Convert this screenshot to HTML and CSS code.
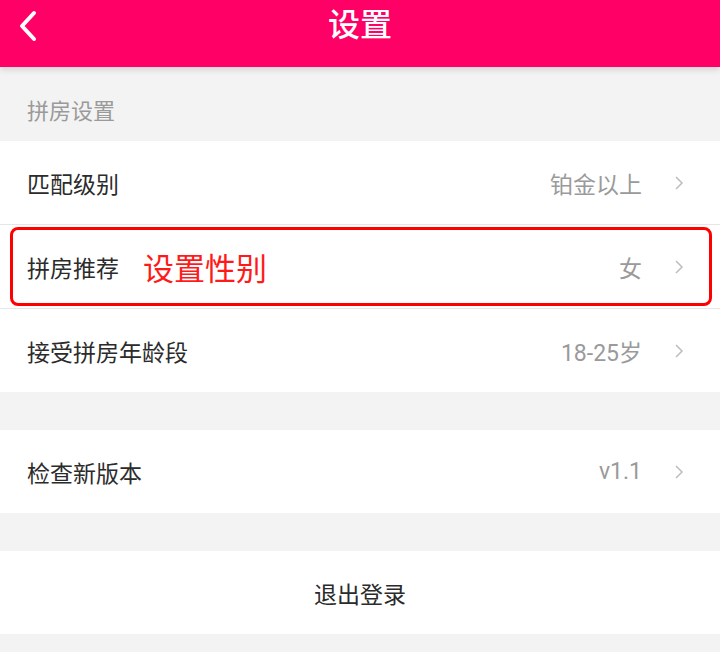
FILE: index.html
```html
<!DOCTYPE html>
<html lang="zh">
<head>
<meta charset="utf-8">
<link rel="stylesheet" href="styles.css">
</head>
<body>
<header class="topbar">
  <svg class="back" width="22" height="32" viewBox="0 0 22 32"><path d="M17 3 L5 16 L17 29" fill="none" stroke="#fff" stroke-width="4" stroke-linecap="round" stroke-linejoin="round"/></svg>
  <h1 class="title">设置</h1>
</header>
<div class="section-label">拼房设置</div>
<div class="group">
  <div class="row">
    <span class="label">匹配级别</span>
    <span class="value">铂金以上</span>
    <svg class="chev" width="10" height="16" viewBox="0 0 10 16"><path d="M2 2 L8 8 L2 14" fill="none" stroke="#bdbdbd" stroke-width="1.5"/></svg>
  </div>
  <div class="row highlight">
    <span class="label">拼房推荐</span>
    <span class="note">设置性别</span>
    <span class="value">女</span>
    <svg class="chev" width="10" height="16" viewBox="0 0 10 16"><path d="M2 2 L8 8 L2 14" fill="none" stroke="#bdbdbd" stroke-width="1.5"/></svg>
    <div class="mark"></div>
  </div>
  <div class="row">
    <span class="label">接受拼房年龄段</span>
    <span class="value">18-25岁</span>
    <svg class="chev" width="10" height="16" viewBox="0 0 10 16"><path d="M2 2 L8 8 L2 14" fill="none" stroke="#bdbdbd" stroke-width="1.5"/></svg>
  </div>
</div>
<div class="group">
  <div class="row">
    <span class="label">检查新版本</span>
    <span class="value">v1.1</span>
    <svg class="chev" width="10" height="16" viewBox="0 0 10 16"><path d="M2 2 L8 8 L2 14" fill="none" stroke="#bdbdbd" stroke-width="1.5"/></svg>
  </div>
</div>
<div class="group">
  <div class="row center">
    <span class="label">退出登录</span>
  </div>
</div>
</body>
</html>
```
FILE: styles.css
```css
html, body {
  margin: 0;
  padding: 0;
}
body {
  background: #f3f3f3;
  font-family: "Roboto", "Noto Sans CJK SC", sans-serif;
  width: 720px;
  height: 652px;
  overflow: hidden;
}
.topbar {
  position: relative;
  height: 67px;
  background: #ff0066;
  display: flex;
  justify-content: center;
  align-items: flex-start;
  box-shadow: 0 3px 6px rgba(0, 0, 0, 0.12);
  z-index: 1;
}
.back {
  position: absolute;
  left: 17px;
  top: 10px;
}
.title {
  margin: 0;
  padding-top: 6px;
  font-size: 32px;
  line-height: 38px;
  font-weight: 500;
  color: #fff;
}
.section-label {
  height: 74px;
  box-sizing: border-box;
  padding: 29px 27px 0;
  font-size: 22px;
  line-height: 32px;
  color: #9a9a9a;
}
.group {
  background: #fff;
  margin-bottom: 38px;
}
.row {
  position: relative;
  height: 84px;
  box-sizing: border-box;
  display: flex;
  align-items: center;
  padding: 0 36px 0 27px;
  border-bottom: 1px solid #e6e6e6;
}
.group .row:last-child {
  border-bottom: none;
  height: 83px;
}
.label {
  font-size: 23px;
  color: #2b2b2b;
}
.note {
  margin-left: 24px;
  font-size: 31px;
  color: #ff1a1a;
}
.value {
  margin-left: auto;
  font-size: 23px;
  color: #9a9a9a;
}
.chev {
  margin-left: 32px;
}
.row.center {
  justify-content: center;
  padding: 0;
}
.mark {
  position: absolute;
  left: 10px;
  right: 8px;
  top: 2px;
  bottom: 2px;
  border: 3px solid #ff0000;
  border-radius: 8px;
}
```
